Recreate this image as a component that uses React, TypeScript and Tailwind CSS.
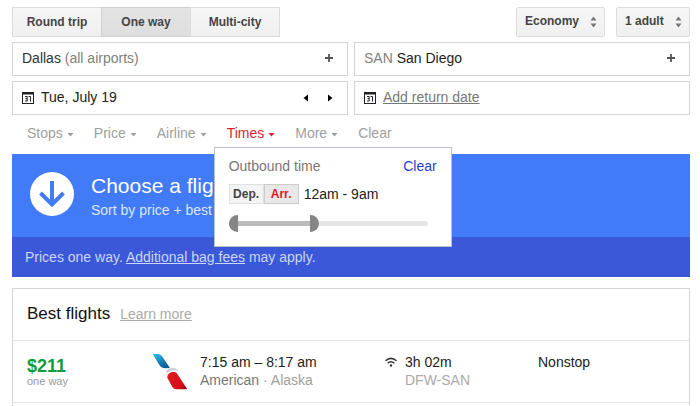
import React, { useState } from 'react';

const tripTypes = ['Round trip', 'One way', 'Multi-city'];

const filters = ['Stops', 'Price', 'Airline', 'Times', 'More'];

const flights = [
  {
    price: '$211',
    time: '7:15 am – 8:17 am',
    carrier: 'American',
    partner: 'Alaska',
    duration: '3h 02m',
    route: 'DFW-SAN',
    stops: 'Nonstop',
  },
];

const LAST_HOUR = 21;

const formatHour = (hour: number) => `${hour % 12 || 12}${hour < 12 ? 'am' : 'pm'}`;

const CalendarIcon = () => (
  <svg viewBox="0 0 12 12" className="w-3 h-3 mt-[3px] shrink-0" aria-hidden="true">
    <path d="M0 0h12v12H0zM1 2.500v8.500h10V2.500z" fill="#222" fillRule="evenodd" />
    <path d="M3 4.500h2.200v4.500H3M3.400 6.700H5M6.600 4.500h1.900v5" fill="none" stroke="#222" />
  </svg>
);

const PlusIcon = () => (
  <svg viewBox="0 0 8 8" className="w-2 h-2" aria-hidden="true">
    <path d="M4 0v8M0 4h8" stroke="#555" strokeWidth="1.8" />
  </svg>
);

const AmericanLogo = () => (
  <svg viewBox="36 24 108 111" className="w-9 h-[37px]" aria-label="American Airlines" role="img">
    <defs>
      <linearGradient id="tail" x1="0" y1="0" x2="0.6" y2="1">
        <stop offset="0" stopColor="#2fc0ee" />
        <stop offset="0.55" stopColor="#1b84c0" />
        <stop offset="1" stopColor="#0c5c94" />
      </linearGradient>
      <linearGradient id="body" x1="0" y1="0" x2="1" y2="1">
        <stop offset="0" stopColor="#e02020" />
        <stop offset="0.75" stopColor="#d80f18" />
        <stop offset="1" stopColor="#6d1220" />
      </linearGradient>
    </defs>
    <path d="M38 27H56Q62 28 66 34L90 69Q76 70 70 69Q62 67 58 60Z" fill="url(#tail)" />
    <path d="M78 80Q82 70 98 69Q111 69 116 78Q104 74 94 77Q86 79 82 84Z" fill="#c9ced4" />
    <path d="M82 98Q81 86 95 81H104Q109 82 112 87L142 133H110Q101 133 97 126Z" fill="url(#body)" />
  </svg>
);

type PickerProps = { label: string; options: string[]; className: string };

const Picker = ({ label, options, className }: PickerProps) => (
  <div className={`grid items-center ${className}`}>
    <select
      aria-label={label}
      className="col-start-1 row-start-1 w-full h-[30px] pl-2 pr-5 pb-0.5 appearance-none rounded-xs border border-[#dcdcdc] bg-linear-to-b from-[#f6f6f6] to-[#f0f0f0] text-xs font-bold text-[#444]"
    >
      {options.map((option) => (
        <option key={option}>{option}</option>
      ))}
    </select>
    <svg
      viewBox="0 0 7 12"
      className="col-start-1 row-start-1 justify-self-end w-[7px] h-3 mr-2 pointer-events-none"
      aria-hidden="true"
    >
      <path d="M0.500 4.500L3.500 0.500L6.500 4.500zM0.500 7.500h6L3.500 11.500z" fill="#777" />
    </svg>
  </div>
);

const thumb =
  'col-start-1 row-start-1 w-full h-[17px] appearance-none bg-transparent pointer-events-none [&::-webkit-slider-thumb]:appearance-none [&::-webkit-slider-thumb]:pointer-events-auto [&::-webkit-slider-thumb]:w-[9px] [&::-webkit-slider-thumb]:h-[17px] [&::-webkit-slider-thumb]:bg-[#858585]';

const TimesMenu = () => {
  const [side, setSide] = useState('Arr.');
  const [from, setFrom] = useState(0);
  const [to, setTo] = useState(9);

  return (
    <div className="absolute z-10 top-full -left-[13px] mt-1 w-[238px] h-[100px] border border-[#b9c0cc] bg-white px-[14px] pt-2 text-[#222]">
      <div className="flex justify-between leading-5">
        <span className="text-[#777]">Outbound time</span>
        <button className="text-[#1a3fd0]">Clear</button>
      </div>
      <div className="flex items-center mt-2">
        {['Dep.', 'Arr.'].map((name) => (
          <button
            key={name}
            onClick={() => setSide(name)}
            aria-pressed={side === name}
            className={`w-[35px] h-5 border text-xs leading-4 font-bold ${
              side === name
                ? 'border-[#ccc] bg-[#e8e8e8] text-[#e01b22]'
                : 'border-[#e0e0e0] bg-[#f4f4f4] text-[#444]'
            }`}
          >
            {name}
          </button>
        ))}
        <span className="ml-[5px] leading-5">
          {formatHour(from)} - {formatHour(to)}
        </span>
      </div>
      <div className="grid items-center mt-[11px] mr-[9px]">
        <div className="col-start-1 row-start-1 h-[5px] rounded-full bg-[#e5e5e5]">
          <div
            className="h-full bg-[#bcbcbc]"
            style={{ marginLeft: `${(from / LAST_HOUR) * 100}%`, width: `${((to - from) / LAST_HOUR) * 100}%` }}
          />
        </div>
        <input
          type="range"
          aria-label="Earliest time"
          min={0}
          max={LAST_HOUR}
          value={from}
          onChange={(e) => setFrom(Math.min(Number(e.target.value), to))}
          className={`${thumb} [&::-webkit-slider-thumb]:rounded-l-full`}
        />
        <input
          type="range"
          aria-label="Latest time"
          min={0}
          max={LAST_HOUR}
          value={to}
          onChange={(e) => setTo(Math.max(Number(e.target.value), from))}
          className={`${thumb} [&::-webkit-slider-thumb]:rounded-r-full`}
        />
      </div>
    </div>
  );
};

const SearchForm = () => {
  const [trip, setTrip] = useState('One way');
  const field = 'flex items-center h-[34px] border border-[#d4d4d4] pl-[9px] pr-[14px] pb-[3px]';

  return (
    <form onSubmit={(e) => e.preventDefault()}>
      <div className="flex justify-between">
        <div className="flex">
          {tripTypes.map((type) => (
            <button
              key={type}
              type="button"
              onClick={() => setTrip(type)}
              aria-pressed={trip === type}
              className={`w-[90px] h-[30px] -mr-px border text-xs font-bold text-[#444] ${
                trip === type
                  ? 'border-[#d0d0d0] bg-linear-to-b from-[#e4e4e4] to-[#dedede]'
                  : 'border-[#dcdcdc] bg-linear-to-b from-[#f6f6f6] to-[#f0f0f0]'
              }`}
            >
              {type}
            </button>
          ))}
        </div>
        <div className="flex gap-[11px]">
          <Picker label="Cabin" options={['Economy', 'Business', 'First']} className="w-[89px]" />
          <Picker label="Passengers" options={['1 adult', '2 adults', '3 adults']} className="w-[74px]" />
        </div>
      </div>

      <div className="grid grid-cols-2 gap-x-[6px] gap-y-[5px] mt-[5px]">
        <div className={field}>
          <button type="button" className="flex-1 text-left text-[#333]">
            Dallas <span className="text-[#808080]">(all airports)</span>
          </button>
          <button type="button" aria-label="Add origin">
            <PlusIcon />
          </button>
        </div>
        <div className={field}>
          <button type="button" className="flex-1 text-left text-[#222]">
            <span className="text-[#808080]">SAN</span> San Diego
          </button>
          <button type="button" aria-label="Add destination">
            <PlusIcon />
          </button>
        </div>
        <div className={field}>
          <CalendarIcon />
          <input
            aria-label="Departure date"
            defaultValue="Tue, July 19"
            className="flex-1 min-w-0 ml-[7px] text-[#222]"
          />
          <div className="flex gap-5 pt-[3px]">
            <button type="button" aria-label="Previous day">
              <svg viewBox="0 0 5 8" className="w-[5px] h-2">
                <path d="M5 0.500v7L0.500 4z" />
              </svg>
            </button>
            <button type="button" aria-label="Next day">
              <svg viewBox="0 0 5 8" className="w-[5px] h-2">
                <path d="M0 0.500v7L4.500 4z" />
              </svg>
            </button>
          </div>
        </div>
        <div className={field}>
          <CalendarIcon />
          <button type="button" className="ml-[7px] text-[#777] underline">
            Add return date
          </button>
        </div>
      </div>
    </form>
  );
};

const FilterBar = () => {
  const [open, setOpen] = useState('Times');

  return (
    <nav className="flex gap-5 pl-[15px] mt-2 leading-5 text-[#a0a0a0]">
      {filters.map((name) => (
        <div key={name} className="relative">
          <button
            onClick={() => setOpen(open === name ? '' : name)}
            aria-expanded={open === name}
            className={`flex items-center gap-1 ${open === name ? 'text-[#dd1f2d]' : ''}`}
          >
            {name}
            <svg viewBox="0 0 7 4" className="w-[7px] h-1 mt-[3px]" aria-hidden="true">
              <path d="M0.500 0h6L3.500 3.500z" fill="currentColor" />
            </svg>
          </button>
          {name === 'Times' && open === 'Times' && <TimesMenu />}
        </div>
      ))}
      <button>Clear</button>
    </nav>
  );
};

const Banner = () => (
  <section className="mt-[11px] bg-[#427bf8] text-white">
    <div className="flex items-center h-[83px] pl-[18px] pb-1">
      <svg viewBox="0 0 44 44" className="w-11 h-11" aria-hidden="true">
        <circle cx="22" cy="22" r="22" fill="#fff" />
        <path d="M22 9v23M10.500 21L22 32.500L33.500 21" fill="none" stroke="#427bf8" strokeWidth="4" />
      </svg>
      <div className="ml-[17px]">
        <h1 className="text-[21px] leading-8">Choose a flight</h1>
        <p className="leading-4 text-[#dbe6ff]">Sort by price + best value</p>
      </div>
    </div>
    <p className="h-10 pl-[13px] leading-10 bg-[#3a58d8] text-[#cbd6fa]">
      Prices one way.{' '}
      <a href="#bag-fees" className="underline">
        Additional bag fees
      </a>{' '}
      may apply.
    </p>
  </section>
);

const Results = () => (
  <section className="flex-1 mt-[11px] border border-b-0 border-[#d4d4d4]">
    <div className="flex items-baseline gap-[10px] h-[52px] pl-[14px] pt-[13px] border-b border-[#e5e5e5]">
      <h2 className="text-[17px] leading-6 text-[#111]">Best flights</h2>
      <a href="#best-flights" className="text-[#aaa] underline">
        Learn more
      </a>
    </div>
    <ul>
      {flights.map((flight) => (
        <li
          key={flight.route}
          className="grid grid-cols-[125px_48px_185px_153px_1fr] h-[62px] pl-[14px] pt-3 border-b border-[#e5e5e5] leading-[18px]"
        >
          <div>
            <div className="pt-[3px] text-lg leading-5 font-bold text-[#0f9d3a]">{flight.price}</div>
            <div className="text-[11px] leading-[10px] text-[#999]">one way</div>
          </div>
          <AmericanLogo />
          <div>
            <div className="text-[#222]">{flight.time}</div>
            <div className="text-[#a0a0a0]">
              <span className="text-[#777]">{flight.carrier}</span> · {flight.partner}
            </div>
          </div>
          <div className="flex gap-2">
            <svg viewBox="0 0 12 10" className="w-3 h-[10px] mt-1" aria-label="Wi-Fi" role="img">
              <path d="M0.500 3.800Q6 -1 11.500 3.800M2.700 6.200Q6 3.500 9.300 6.200" fill="none" stroke="#333" strokeWidth="1.500" />
              <circle cx="6" cy="8.500" r="1.200" fill="#333" />
            </svg>
            <div>
              <div className="text-[#222]">{flight.duration}</div>
              <div className="text-[#aaa]">{flight.route}</div>
            </div>
          </div>
          <div className="text-[#222]">{flight.stops}</div>
        </li>
      ))}
    </ul>
  </section>
);

const App = () => (
  <main className="flex flex-col min-h-screen bg-white pl-3 pr-[10px] pt-[7px] font-['Liberation_Sans',Arial,sans-serif] text-sm">
    <SearchForm />
    <FilterBar />
    <Banner />
    <Results />
  </main>
);

export default App;
